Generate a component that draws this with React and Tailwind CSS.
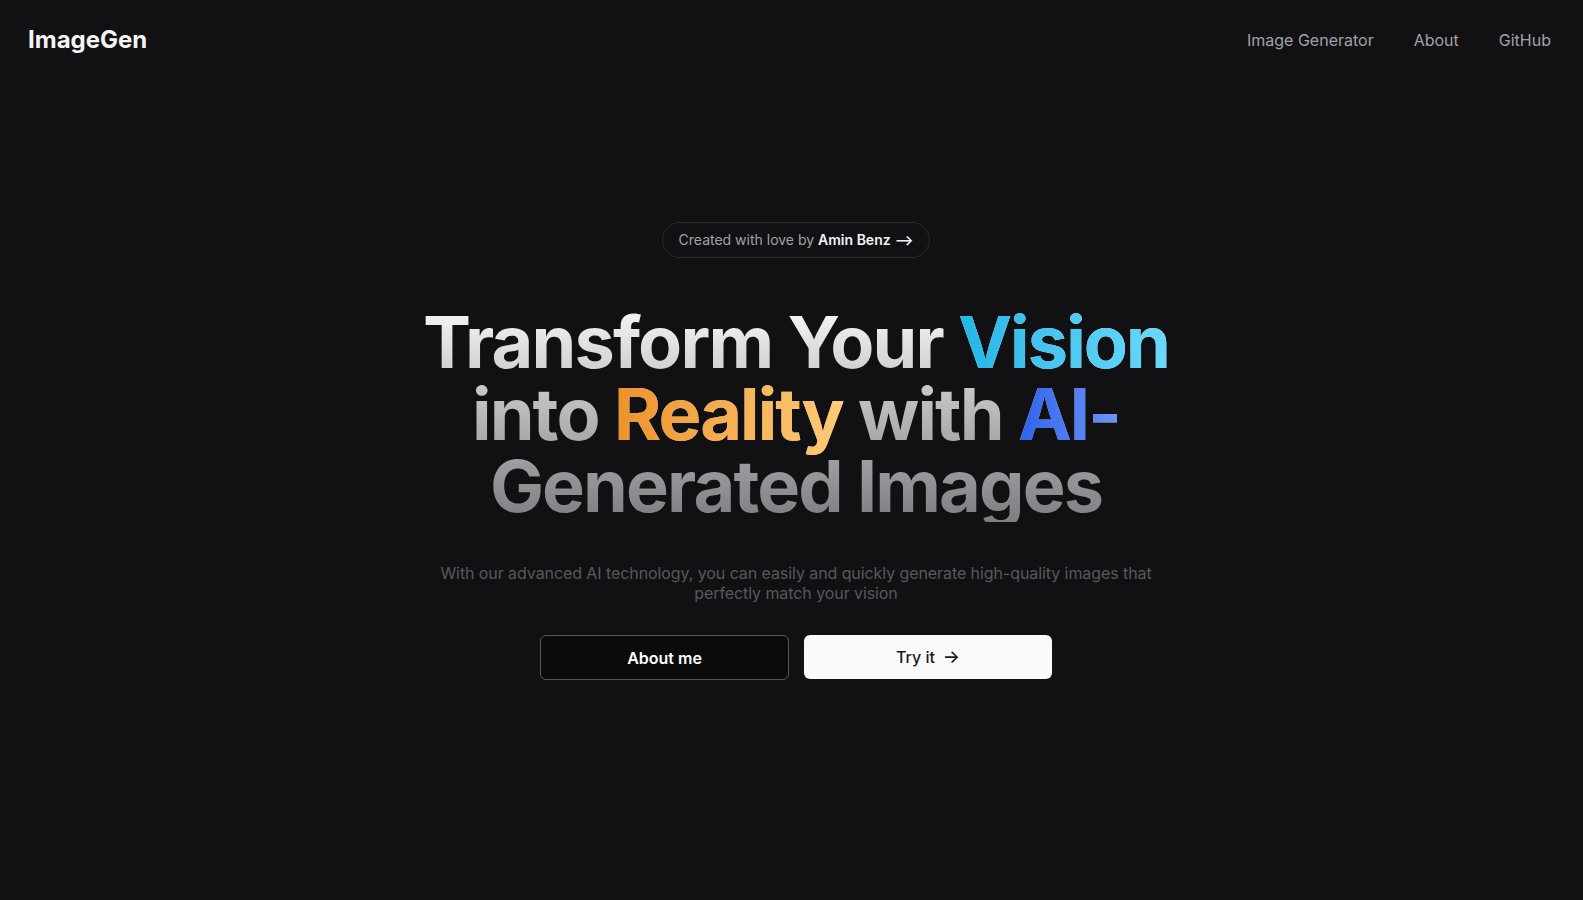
import React from 'react';

const NAV = ['Image Generator', 'About', 'GitHub'];

export default function App() {
  return (
    <div className="min-h-screen bg-[#111113] text-white" style={{ fontFamily: 'Inter, "Noto Sans", sans-serif' }}>
      <header className="flex h-20 items-center justify-between pl-7 pr-8">
        <a href="#" className="text-2xl font-bold text-[#f4f4f5]">ImageGen</a>
        <nav className="flex items-center gap-10 text-base text-[#a1a1aa]">
          {NAV.map((item) => (
            <a key={item} href="#" className="hover:text-white">{item}</a>
          ))}
        </nav>
      </header>

      <main className="flex flex-col items-center pl-[17px] pr-2 pt-[142px] text-center">
        <a
          href="#"
          className="flex h-9 items-center rounded-full border border-[#2c2c30] px-4 text-sm text-[#a1a1aa]"
        >
          Created with love by&nbsp;<span className="font-semibold text-[#f4f4f5]">Amin Benz</span>
          <span className="ml-1 font-semibold text-[#f4f4f5]">⟶</span>
        </a>

        <h1 className="mt-12 max-w-[800px] bg-gradient-to-b from-[#f7f7f8] to-[#7d7d82] bg-clip-text text-[72px] font-bold leading-[72px] tracking-[-0.026em] text-transparent">
          Transform Your{' '}
          <span className="bg-gradient-to-r from-[#1fb6e8] to-[#6ad9fb] bg-clip-text text-transparent">Vision</span>{' '}
          into{' '}
          <span className="bg-gradient-to-r from-[#ec9327] to-[#ffcb74] bg-clip-text text-transparent">Reality</span>{' '}
          with{' '}
          <span className="bg-gradient-to-r from-[#2d63eb] to-[#6f93f9] bg-clip-text text-transparent">AI-</span>
          Generated Images
        </h1>

        <p className="mt-[41px] max-w-[740px] text-base leading-5 tracking-[-0.005em] text-[#58585e]">
          With our advanced AI technology, you can easily and quickly generate high-quality images that perfectly match your vision
        </p>

        <div className="mt-8 flex gap-[15px]">
          <button className="flex h-[45px] w-[249px] items-center justify-center rounded-md border border-[#56565c] bg-[#0b0b0c] text-base font-semibold text-white">
            About me
          </button>
          <button className="flex h-[44px] w-[248px] items-center justify-center gap-2 rounded-md bg-[#fafafa] text-base font-medium text-[#18181b]">
            Try it <span className="text-lg leading-none">→</span>
          </button>
        </div>
      </main>
    </div>
  );
}
